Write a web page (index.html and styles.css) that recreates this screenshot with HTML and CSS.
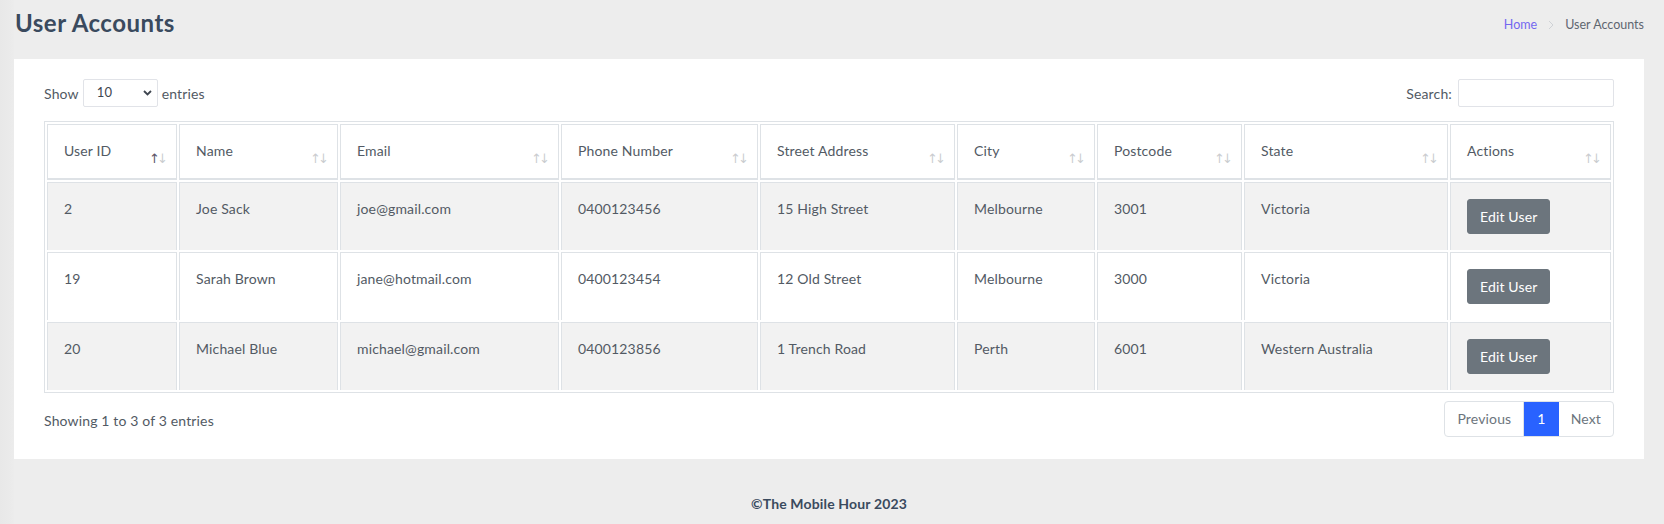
FILE: index.html
```html
<!DOCTYPE html>
<html lang="en">
<head>
<meta charset="utf-8">
<title>User Accounts</title>
<link rel="stylesheet" href="styles.css">
</head>
<body>
<div class="layout">
  <div class="edge"></div>
  <div class="main">
    <div class="page-head">
      <h1 class="page-title">User Accounts</h1>
      <nav class="crumbs">
        <a class="crumb-link" href="#">Home</a>
        <svg class="crumb-sep" width="6" height="10" viewBox="0 0 6 10"><polyline points="1,1 5,5 1,9" fill="none" stroke="#cfd2d6" stroke-width="1"/></svg>
        <span class="crumb-current">User Accounts</span>
      </nav>
    </div>

    <section class="card">
      <div class="controls">
        <label class="length">Show
          <span class="select">
            <span class="select-val">10</span>
            <svg class="select-caret" width="9" height="6" viewBox="0 0 9 6"><polyline points="1,1 4.5,4.5 8,1" fill="none" stroke="#3f4650" stroke-width="1.8"/></svg>
          </span>
          entries</label>
        <label class="search">Search: <span class="search-input"></span></label>
      </div>

      <table class="grid">
        <thead>
          <tr>
            <th class="c-id sorted">User ID</th>
            <th class="c-name">Name</th>
            <th class="c-email">Email</th>
            <th class="c-phone">Phone Number</th>
            <th class="c-street">Street Address</th>
            <th class="c-city">City</th>
            <th class="c-post">Postcode</th>
            <th class="c-state">State</th>
            <th class="c-act">Actions</th>
          </tr>
        </thead>
        <tbody>
          <tr class="odd">
            <td>2</td><td>Joe Sack</td><td>joe@gmail.com</td><td>0400123456</td><td>15 High Street</td><td>Melbourne</td><td>3001</td><td>Victoria</td>
            <td><a class="btn" href="#">Edit User</a></td>
          </tr>
          <tr>
            <td>19</td><td>Sarah Brown</td><td>jane@hotmail.com</td><td>0400123454</td><td>12 Old Street</td><td>Melbourne</td><td>3000</td><td>Victoria</td>
            <td><a class="btn" href="#">Edit User</a></td>
          </tr>
          <tr class="odd">
            <td>20</td><td>Michael Blue</td><td>michael@gmail.com</td><td>0400123856</td><td>1 Trench Road</td><td>Perth</td><td>6001</td><td>Western Australia</td>
            <td><a class="btn" href="#">Edit User</a></td>
          </tr>
        </tbody>
      </table>

      <div class="table-foot">
        <div class="info">Showing 1 to 3 of 3 entries</div>
        <ul class="pager">
          <li class="pg pg-prev">Previous</li>
          <li class="pg pg-active">1</li>
          <li class="pg pg-next">Next</li>
        </ul>
      </div>
    </section>

    <footer class="site-foot">©The Mobile Hour 2023</footer>
  </div>
</div>
</body>
</html>
```

FILE: styles.css
```css
* { box-sizing: border-box; }
html, body { margin: 0; padding: 0; }
body {
  background: #ededed;
  font-family: Lato, "Open Sans", "Liberation Sans", sans-serif;
  font-size: 14px;
  line-height: 1.5;
  letter-spacing: 0.15px;
  color: #525a64;
}
.layout { display: flex; min-height: 524px; }
.edge {
  width: 14px;
  flex: 0 0 14px;
  background: linear-gradient(to right, #e8e8e8, #eaeaea 60%, #ececec);
}
.main { flex: 1; padding-right: 20px; }

.page-head {
  height: 59px;
  display: flex;
  align-items: flex-start;
  justify-content: space-between;
  padding-top: 8px;
}
.page-title {
  margin: 0 0 0 1px;
  font-size: 24px;
  line-height: 30px;
  font-weight: 700;
  letter-spacing: 0.5px;
  color: #3a4a5e;
}
.crumbs {
  display: flex;
  align-items: center;
  gap: 9px;
  font-size: 12.5px;
  line-height: 20px;
  letter-spacing: 0;
  padding-top: 7px;
}
.crumb-link { color: #7367f0; text-decoration: none; }
.crumb-current { color: #5f6670; }
.crumb-sep { margin: 0 2px; }

.card {
  background: #fff;
  padding: 20px 30px 22px;
}
.controls {
  display: flex;
  justify-content: space-between;
  align-items: center;
  height: 28px;
}
.length, .search {
  display: flex;
  align-items: center;
  gap: 4px;
  color: #525a64;
}
.select {
  display: inline-flex;
  align-items: center;
  justify-content: space-between;
  width: 75px;
  height: 28px;
  border: 1px solid #e1e3e8;
  border-radius: 2px;
  padding: 0 5px 0 13px;
  font-size: 13px;
  color: #3f4650;
}
.search-input {
  display: inline-block;
  width: 156px;
  height: 28px;
  border: 1px solid #e1e3e8;
  border-radius: 2px;
  margin-left: 2px;
}

.grid {
  width: 100%;
  margin-top: 14px;
  table-layout: fixed;
  border-collapse: separate;
  border-spacing: 2px;
  border: 1px solid #dee2e6;
}
.grid th, .grid td {
  border: 1px solid #dee2e6;
  border-bottom: 0;
  padding: 16px;
  text-align: left;
  vertical-align: top;
  font-weight: 400;
  white-space: nowrap;
}
.grid th {
  position: relative;
  border-bottom: 2px solid #dee2e6;
  padding-right: 30px;
  padding-top: 15px;
  padding-bottom: 17px;
}
.grid th::before, .grid th::after {
  position: absolute;
  bottom: 12px;
  line-height: 14px;
  opacity: 0.3;
  font-family: "DejaVu Sans", sans-serif;
  font-size: 13px;
  letter-spacing: 0;
}
.grid th::before { content: "\2191"; right: 16px; }
.grid th::after { content: "\2193"; right: 8px; }
.grid th.sorted::before { opacity: 1; color: #5d5668; }
.odd td { background: #f2f2f2; }

.c-id { width: 130px; }
.c-name { width: 159px; }
.c-email { width: 219px; }
.c-phone { width: 197px; }
.c-street { width: 195px; }
.c-city { width: 138px; }
.c-post { width: 145px; }
.c-state { width: 204px; }
.c-act { width: 161px; }

.grid td { padding-top: 15px; }
.grid td:last-child { padding-top: 16px; padding-bottom: 16px; }

.btn {
  display: inline-block;
  padding: 6px 12px;
  border: 1px solid #6c757d;
  border-radius: 3px;
  background: #6c757d;
  color: #fff;
  text-decoration: none;
  line-height: 21px;
}

.table-foot {
  display: flex;
  justify-content: space-between;
  align-items: flex-start;
  margin-top: 8px;
}
.info { padding-top: 9px; }
.pager {
  display: flex;
  list-style: none;
  margin: 0;
  padding: 0;
  border: 1px solid #dee2e6;
  border-radius: 4px;
  overflow: hidden;
  height: 36px;
}
.pg {
  padding: 0 12px;
  line-height: 33px;
  color: #6c757d;
}
.pg-prev { border-right: 1px solid #dee2e6; }
.pg-active { background: #2962ff; color: #fff; padding: 0 13px; }

.site-foot {
  text-align: center;
  font-weight: 700;
  color: #3a4a5e;
  padding-top: 34px;
}
```
